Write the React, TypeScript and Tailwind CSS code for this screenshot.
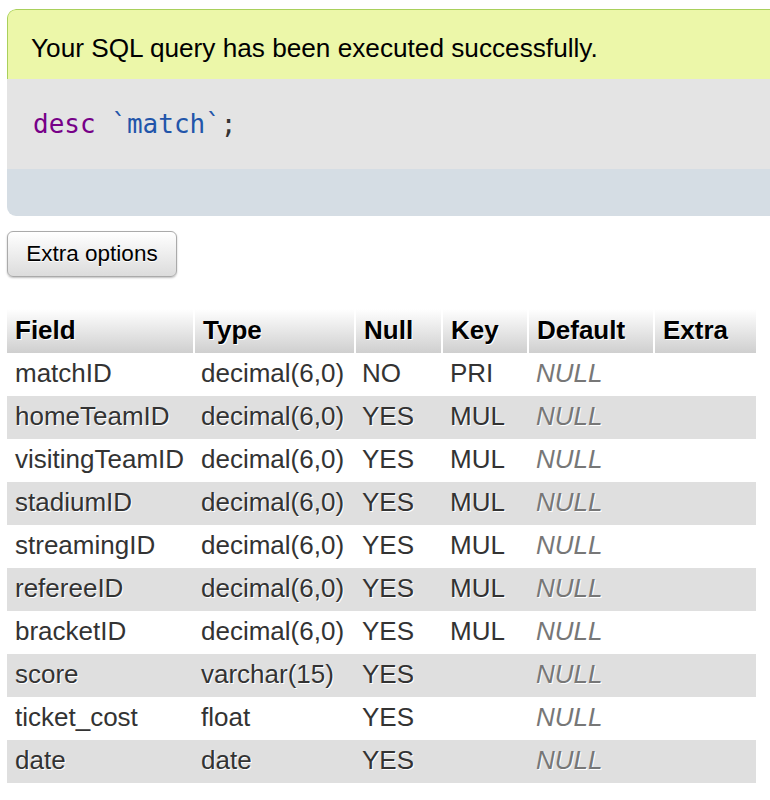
const rows = [
  { field: "matchID", type: "decimal(6,0)", nul: "NO", key: "PRI" },
  { field: "homeTeamID", type: "decimal(6,0)", nul: "YES", key: "MUL" },
  { field: "visitingTeamID", type: "decimal(6,0)", nul: "YES", key: "MUL" },
  { field: "stadiumID", type: "decimal(6,0)", nul: "YES", key: "MUL" },
  { field: "streamingID", type: "decimal(6,0)", nul: "YES", key: "MUL" },
  { field: "refereeID", type: "decimal(6,0)", nul: "YES", key: "MUL" },
  { field: "bracketID", type: "decimal(6,0)", nul: "YES", key: "MUL" },
  { field: "score", type: "varchar(15)", nul: "YES", key: "" },
  { field: "ticket_cost", type: "float", nul: "YES", key: "" },
  { field: "date", type: "date", nul: "YES", key: "" },
];

const headers = [
  { label: "Field", w: "w-[187px]" },
  { label: "Type", w: "w-[161px]" },
  { label: "Null", w: "w-[87px]" },
  { label: "Key", w: "w-[86px]" },
  { label: "Default", w: "w-[126px]" },
  { label: "Extra", w: "w-[102px]" },
];

export default function App() {
  return (
    <div className="min-h-[800px] overflow-hidden bg-white font-['Liberation_Sans',Arial,sans-serif] text-black">
      <div className="ml-[7px] mr-[-40px] mt-[9px] overflow-hidden rounded-l-[9px]">
        <div className="rounded-tl-[9px] border-l border-t border-[#a9d05b] bg-[#ecf7a9] px-[23px] pt-[24px] pb-[16px] text-[26.2px] leading-[29px]">
          Your SQL query has been executed successfully.
        </div>
        <div className="bg-[#e4e4e4] px-[26px] pt-[30px] pb-[30px] font-['DejaVu_Sans_Mono',monospace] text-[26px] leading-[30px]">
          <span className="text-[#770088]">desc</span>{" "}
          <span className="text-[#2255aa]">`match`</span>
          <span className="text-[#333]">;</span>
        </div>
        <div className="h-[47px] bg-[#d5dde4]" />
      </div>

      <button
        type="button"
        className="ml-[7px] mt-[15px] h-[46px] w-[170px] rounded-[6px] border border-[#aaa] bg-linear-to-b from-white to-[#dcdcdc] text-[22.5px] text-black shadow-[0_1px_2px_rgba(0,0,0,0.25)] [text-shadow:0_1px_0_#fff]"
      >
        Extra options
      </button>

      <table className="ml-[7px] mt-[32px] w-[749px] table-fixed border-collapse text-[26px]">
        <thead>
          <tr>
            {headers.map((h, i) => (
              <th
                key={h.label}
                className={`${h.w} h-[44px] bg-linear-to-b from-white to-[#cfcfcf] px-[8px] pb-[2px] text-left font-bold leading-[30px] [text-shadow:1px_1px_0_#fff] ${
                  i < headers.length - 1 ? "border-r-[2px] border-white" : ""
                }`}
              >
                {h.label}
              </th>
            ))}
          </tr>
        </thead>
        <tbody>
          {rows.map((r, i) => (
            <tr
              key={r.field}
              className={`h-[43px] text-[#333] [text-shadow:1px_1px_0_#fff] ${i % 2 === 1 ? "bg-[#dfdfdf]" : "bg-white"}`}
            >
              <td className="whitespace-nowrap px-[8px] pb-[4px] leading-[30px]">{r.field}</td>
              <td className="whitespace-nowrap px-[7px] pb-[4px] leading-[30px]">{r.type}</td>
              <td className="px-[7px] pb-[4px] leading-[30px]">{r.nul}</td>
              <td className="px-[8px] pb-[4px] leading-[30px]">{r.key}</td>
              <td className="px-[8px] pb-[4px] italic leading-[30px] text-[#777]">NULL</td>
              <td className="px-[8px] pb-[4px] leading-[30px]"></td>
            </tr>
          ))}
        </tbody>
      </table>
    </div>
  );
}
